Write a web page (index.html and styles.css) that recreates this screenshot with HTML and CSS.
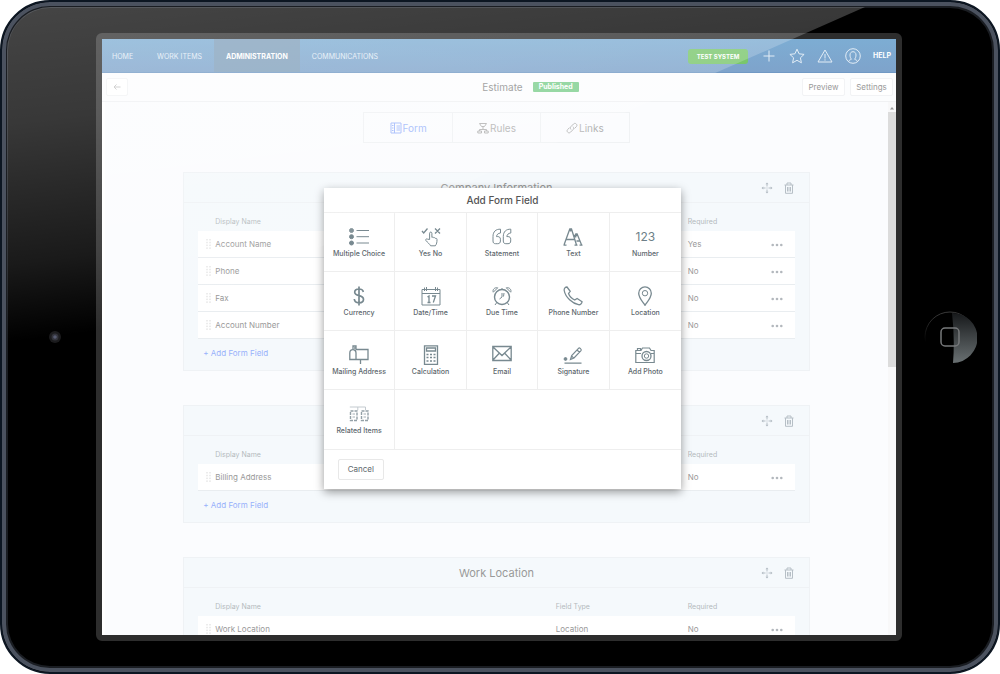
FILE: index.html
```html
<!DOCTYPE html>
<html lang="en">
<head>
<meta charset="utf-8">
<title>Estimate form</title>
<link rel="stylesheet" href="styles.css">
</head>
<body>
<svg class="defs" aria-hidden="true">
  <symbol id="move" viewBox="0 0 12 12"><path d="M6 1v3.500M6 7.500V11M1 6h3.500M7.500 6H11M6 5.500v1" stroke="currentColor" stroke-width="1" fill="none"/><path d="M4.500 2.300L6 .5l1.500 1.800zM4.500 9.700L6 11.500l1.500-1.800zM2.300 4.500L.5 6l1.800 1.500zM9.700 4.500L11.500 6 9.700 7.500z" fill="currentColor" stroke="none"/></symbol>
  <symbol id="trash" viewBox="0 0 12 12"><path d="M1.500 3h9M4 3V1h4v2M2.500 3v8.300h7V3M4.500 5v4.500M6 5v4.500M7.500 5v4.500" stroke="currentColor" fill="none"/></symbol>
  <symbol id="grip" viewBox="0 0 5 10"><path d="M1 0v10M4 0v10" stroke="currentColor" stroke-dasharray="1.500 1.300" fill="none"/></symbol>
  <symbol id="dots" viewBox="0 0 12 4"><circle cx="1.700" cy="2" r="1.300"/><circle cx="6" cy="2" r="1.300"/><circle cx="10.300" cy="2" r="1.300"/></symbol>
</svg>
<div class="tablet">
  <div class="side side-left">
    <svg class="camera" viewBox="0 0 14 14"><circle cx="7" cy="7" r="6" fill="#1b1b1d"/><circle cx="7" cy="7" r="3.500" fill="#33343c"/><circle cx="7" cy="7" r="1.800" fill="#565b70"/></svg>
  </div>
  <div class="screen">
    <header class="nav">
      <nav class="links">
        <a href="#">HOME</a>
        <a href="#">WORK ITEMS</a>
        <a href="#" class="active">ADMINISTRATION</a>
        <a href="#">COMMUNICATIONS</a>
      </nav>
      <div class="tools">
        <span class="system">TEST SYSTEM</span>
        <button aria-label="Add"><svg viewBox="0 0 16 16"><path d="M8 2.500v11M2.500 8h11"/></svg></button>
        <button aria-label="Favorites"><svg viewBox="0 0 16 16"><path d="M8 1.200l2.100 4.600 5 .6-3.700 3.400 1 5L8 12.300l-4.400 2.500 1-5L.9 6.400l5-.6z"/></svg></button>
        <button aria-label="Alerts"><svg viewBox="0 0 16 16"><path d="M8 2L15 14H1zM8 6v4.500M8 11.300v1.300"/></svg></button>
        <button aria-label="Profile"><svg viewBox="0 0 16 16"><circle cx="8" cy="8" r="7.300"/><path d="M3.500 13.500c.5-1.500 2-1.700 3-2.300C5.400 10.300 5 8.500 5 7c0-2 1.200-3.300 3-3.300S11 5 11 7c0 1.500-.4 3.300-1.500 4.200 1 .6 2.500.8 3 2.300"/></svg></button>
        <a href="#" class="help">HELP</a>
      </div>
    </header>
    <div class="bar">
      <button class="btn back" aria-label="Back"><svg viewBox="0 0 8 8"><path d="M7.500 4H1M3.500 1.500L1 4l2.500 2.500"/></svg></button>
      <h1>Estimate</h1>
      <div class="bar-right">
        <span class="badge">Published</span>
        <button class="btn">Preview</button>
        <button class="btn">Settings</button>
      </div>
    </div>
    <div class="body">
      <main class="content">
        <div class="tabs">
          <button class="on"><svg viewBox="0 0 12 12"><path d="M1 1h10v10H1zM4.500 1v10M6.500 4H10M6.500 6H10M6.500 8H10M2 3.500h1.500M2 6h1.500M2 8.500h1.500"/></svg>Form</button>
          <button><svg viewBox="0 0 12 12"><path d="M2.500 1.500h7L7.500 4.500h-3zM6 4.500v3M2.500 9V7.500h7V9M.8 9h3.700v2H.8zM7.500 9h3.700v2H7.500z"/></svg>Rules</button>
          <button><svg viewBox="0 0 12 12"><path d="M5 7.500c-1-1-.8-2.200 0-3L7.500 2c1-1 2-.8 2.800 0s.9 1.800 0 2.700L8.500 6.500M7 4.700c1 1 .8 2.200 0 3L4.500 10.200c-1 1-2 .8-2.800 0s-.9-1.800 0-2.700l1.800-1.900"/></svg>Links</button>
        </div>
        <section class="card">
          <div class="card-head"><h2>Company Information</h2>
            <div class="acts"><button aria-label="Move"><svg><use href="#move"/></svg></button><button aria-label="Delete"><svg><use href="#trash"/></svg></button></div></div>
          <div class="card-body">
            <table>
              <thead><tr><th class="c-grip"></th><th>Display Name</th><th class="c-type"></th><th class="c-req">Required</th><th class="c-more"></th></tr></thead>
              <tbody>
                <tr><td class="c-grip"><svg><use href="#grip"/></svg></td><td>Account Name</td><td></td><td>Yes</td><td><button class="more" aria-label="More"><svg><use href="#dots"/></svg></button></td></tr>
                <tr><td class="c-grip"><svg><use href="#grip"/></svg></td><td>Phone</td><td></td><td>No</td><td><button class="more" aria-label="More"><svg><use href="#dots"/></svg></button></td></tr>
                <tr><td class="c-grip"><svg><use href="#grip"/></svg></td><td>Fax</td><td></td><td>No</td><td><button class="more" aria-label="More"><svg><use href="#dots"/></svg></button></td></tr>
                <tr><td class="c-grip"><svg><use href="#grip"/></svg></td><td>Account Number</td><td></td><td>No</td><td><button class="more" aria-label="More"><svg><use href="#dots"/></svg></button></td></tr>
              </tbody>
            </table>
            <a href="#" class="add">+ Add Form Field</a>
          </div>
        </section>
        <section class="card">
          <div class="card-head"><h2></h2>
            <div class="acts"><button aria-label="Move"><svg><use href="#move"/></svg></button><button aria-label="Delete"><svg><use href="#trash"/></svg></button></div></div>
          <div class="card-body">
            <table>
              <thead><tr><th class="c-grip"></th><th>Display Name</th><th class="c-type"></th><th class="c-req">Required</th><th class="c-more"></th></tr></thead>
              <tbody>
                <tr><td class="c-grip"><svg><use href="#grip"/></svg></td><td>Billing Address</td><td></td><td>No</td><td><button class="more" aria-label="More"><svg><use href="#dots"/></svg></button></td></tr>
              </tbody>
            </table>
            <a href="#" class="add">+ Add Form Field</a>
          </div>
        </section>
        <section class="card">
          <div class="card-head"><h2>Work Location</h2>
            <div class="acts"><button aria-label="Move"><svg><use href="#move"/></svg></button><button aria-label="Delete"><svg><use href="#trash"/></svg></button></div></div>
          <div class="card-body">
            <table>
              <thead><tr><th class="c-grip"></th><th>Display Name</th><th class="c-type">Field Type</th><th class="c-req">Required</th><th class="c-more"></th></tr></thead>
              <tbody>
                <tr><td class="c-grip"><svg><use href="#grip"/></svg></td><td>Work Location</td><td>Location</td><td>No</td><td><button class="more" aria-label="More"><svg><use href="#dots"/></svg></button></td></tr>
              </tbody>
            </table>
          </div>
        </section>
      </main>
      <div class="scroll"><svg viewBox="0 0 8 8"><path d="M2 5.500h4L4 3z" fill="#999"/></svg><div class="thumb"></div></div>
    </div>
    <div class="overlay">
      <div class="modal" role="dialog" aria-labelledby="dlg">
        <h2 id="dlg">Add Form Field</h2>
        <div class="grid">
          <button><svg viewBox="0 0 20 20"><g fill="#788990"><circle cx="2.500" cy="3.500" r="2"/><circle cx="2.500" cy="9.700" r="2"/><circle cx="2.500" cy="16" r="2"/></g><path d="M7.500 3.500H20M7.500 9.700H20M7.500 16H20"/></svg>Multiple Choice</button>
          <button><svg viewBox="0 0 20 20"><path d="M1 4l1.700 2L6.500 1.500M14 1.500l5 5M19 1.500l-5 5" stroke-width="1.300"/><path d="M8.600 12.500V6.200c0-1.500 2.300-1.500 2.300 0v4.200c.8-.5 1.700-.3 1.900.4.700-.4 1.500 0 1.700.6 1-.2 1.500.2 1.500 1 0 3-.3 4.600-1.700 6.400H9.600c-1-2-3-3.200-4.700-5.300-.7-1 .4-2 1.500-1.400z"/></svg>Yes No</button>
          <button><svg viewBox="0 0 20 20"><path d="M8.500 2.200C4 2 1 4.500 1 9.500V14c0 1.800.9 2.700 2.500 2.700h2.200c1.800 0 2.700-1 2.700-2.700v-1.800c0-1.700-1-2.600-2.600-2.600H4.500C4.800 7.500 6 6.300 8.500 6zM18.800 2.200c-4.500-.2-7.500 2.300-7.500 7.300V14c0 1.800.9 2.700 2.500 2.700H16c1.800 0 2.700-1 2.700-2.700v-1.800c0-1.700-1-2.600-2.600-2.600h-1.300c.3-2.100 1.500-3.300 4-3.600z"/></svg>Statement</button>
          <button><svg viewBox="0 0 20 20"><path d="M1 18L6.800 2h1.700l5 16M3.400 12.500h8.300M.5 18.200h3M7.600 4.500v-2M10.800 10.500l2-3.500h1.300l4.500 11M13.500 7l-1 3.500M13.500 14h3.600M11.500 18.200h3M16.500 18.200h3" stroke-width="1.300"/></svg>Text</button>
          <button><span class="digits">123</span>Number</button>
          <button><svg viewBox="0 0 20 20"><path d="M14.300 6C14 4 12.500 3 10 3 7.300 3 5.700 4.300 5.700 6.200c0 4.600 8.800 2.300 8.800 7 0 2.300-1.800 3.600-4.500 3.600S5.500 15.500 5.300 13M10 .5v19" stroke-width="1.700"/></svg>Currency</button>
          <button><svg viewBox="0 0 20 20"><path d="M1 3.500h18V19H1zM1 7.500h18M5.500 1v4M14.500 1v4M3.500 1.500v3.500M16.500 1.500v3.500"/><path d="M6.500 11l1.500-1v6.500M6.500 16.500h3M11 10h3.500L12.300 16.500" stroke-width="1.300"/></svg>Date/Time</button>
          <button><svg viewBox="0 0 20 20"><circle cx="10" cy="11" r="7.500" stroke-width="1.400"/><path d="M10 11V7M10 11l-2.500 2M12 7l-.5 3.500M4.600 16.800L3 19M15.400 16.800L17 19M1.300 6.200C.2 4 2.500 1 5.700 1.800zM18.700 6.200c1.100-2.200-1.200-5.200-4.400-4.400zM10 3.500V2"/></svg>Due Time</button>
          <button><svg viewBox="0 0 20 20"><path d="M1.200 4.500C.8 2.300 2.500 1 4 1l3.200 4.300-1.700 2.200c1 2.700 3.500 5.200 6.200 6.500l2.400-1.500 5 3.200c-.3 2-1.700 3.300-3.600 3C9.500 17.500 2.500 11.500 1.200 4.500z" stroke-width="1.300"/></svg>Phone Number</button>
          <button><svg viewBox="0 0 20 20"><path d="M10 19.300C7 15 3.700 11.500 3.700 7.200a6.300 6.300 0 0 1 12.600 0C16.300 11.500 13 15 10 19.300z" stroke-width="1.300"/><circle cx="10" cy="7.200" r="2.700"/></svg>Location</button>
          <button><svg viewBox="0 0 20 20"><path d="M6.500 4.500H19v10H7V8C7 3.500.8 3.500.8 8v6.500H7M4 5V1h3v2H5M11.500 14.500V19" stroke-width="1.300"/></svg>Mailing Address</button>
          <button><svg viewBox="0 0 20 20"><path d="M3.500.8h13v18.500h-13zM5.500 3h9v3h-9z" stroke-width="1.300"/><path d="M5.500 9.500h9M5.500 12.500h9M5.500 16h9" stroke-dasharray="2 1.500" stroke-width="1.500"/></svg>Calculation</button>
          <button><svg viewBox="0 0 20 20"><path d="M.8 1.500h18.400v14H.8zM1 2l9 8.500L19 2M1 15l6-6.500M19 15l-6-6.500" stroke-width="1.300"/></svg>Email</button>
          <button><svg viewBox="0 0 20 20"><path d="M1.500 18.200H18.500M7.500 14.500l1.200-4L15.500 3.300c1-1 3.500 1 2.500 2.300L11 13zM14 5l2.500 2.300M8.500 10.800l2.300 2.300" stroke-width="1.200"/><circle cx="2.500" cy="14" r="1.400" fill="#788990"/></svg>Signature</button>
          <button><svg viewBox="0 0 20 20"><path d="M.8 5.500H6L7.500 3h7L16 5.500h3.200v12H.8zM2.500 5.500V3.500h3v2M1 8.500h5M16 8.500h3" stroke-width="1.200"/><circle cx="11.500" cy="11" r="4.500" stroke-width="1.300"/><circle cx="11.500" cy="11" r="2.200"/></svg>Add Photo</button>
          <button><svg viewBox="0 0 20 20"><path d="M.8 3h15.700v3M8.800 3v3" stroke="#c3cacf"/><path d="M1.500 7H8v9.500H1.500zM12.500 7H19v9.500h-6.500z" stroke="#93a0a7" stroke-dasharray="3 1" stroke-width="1.400"/><path d="M3.500 10H6M3.500 13H6M14.500 10H17M14.500 13H17" stroke="#a5b0b6"/></svg>Related Items</button>
          <div class="blank"></div>
        </div>
        <footer><button class="cancel">Cancel</button></footer>
      </div>
    </div>
  </div>
  <div class="side">
    <svg class="home" viewBox="0 0 54 54">
      <defs><linearGradient id="hg" x1="0" y1="0" x2="0" y2="1"><stop offset="0" stop-color="#17191b"/><stop offset="1" stop-color="#697072"/></linearGradient>
      <linearGradient id="ring" x1="0" y1="0" x2="0" y2="1"><stop offset="0" stop-color="#3a3a3a"/><stop offset=".6" stop-color="#000"/></linearGradient></defs>
      <circle cx="27" cy="27" r="25" fill="#000" stroke="url(#ring)"/>
      <path d="M29 3a25 25 0 0 1 1 50q2-25-1-50z" fill="url(#hg)"/>
      <rect x="18" y="18" width="18" height="18" rx="4" fill="none" stroke="#77797b" stroke-width="1.500"/>
    </svg>
  </div>
  <div class="gloss"></div>
</div>
</body>
</html>
```
FILE: styles.css
```css
* { box-sizing: border-box; }
body { margin: 0; background: #fff; font-family: Inter, "Liberation Sans", sans-serif; font-size: 8px; line-height: 10px; color: #999; }
button { font: inherit; color: inherit; background: none; border: 0; padding: 0; }
a { color: inherit; text-decoration: none; }
h1, h2 { margin: 0; font-weight: 400; }
svg { display: block; fill: none; stroke: currentColor; }
.defs { position: absolute; width: 0; height: 0; }

.tablet {
  position: relative; height: 100vh; overflow: hidden;
  display: grid; grid-template-columns: 94px minmax(0, 1fr) 96px;
  padding: 31px 0;
  background: #000; border: 2px solid #0c1622; border-radius: 50px;
  box-shadow: inset 0 0 0 4px #4b525f, inset 0 0 0 6px #1a1d22;
}
.side { display: grid; place-items: center; }
.side-left { padding-left: 12px; }
.camera { width: 14px; height: 14px; stroke: none; }
.home { width: 54px; height: 54px; stroke: none; }
.gloss {
  position: absolute; inset: 5px; pointer-events: none; border-radius: 44px;
  background: linear-gradient(173deg, rgba(255,255,255,.27), rgba(255,255,255,.22) 15%, rgba(255,255,255,.1) 33%, rgba(255,255,255,0) 43%);
  clip-path: polygon(0 0, 858px 0, 0 378px);
}

.screen {
  position: relative; min-height: 0; overflow: hidden;
  display: flex; flex-direction: column;
  background: #fff; border: 6px solid #2d2d2d; border-radius: 6px;
}
.nav {
  flex: none; height: 34px; display: flex; justify-content: space-between;
  background: linear-gradient(#7dadd3, #7ea3cb); border-bottom: 1px solid #7199c4;
  color: #e3edf6; font-size: 7px;
}
.links { display: flex; }
.links a { display: flex; align-items: center; padding: 3px 12px 0; }
.links a:first-child { padding-left: 10px; }
.links .active { background: #7f9fbb; color: #fff; font-weight: 700; }
.tools { display: flex; align-items: center; gap: 12px; padding: 1px 5px 0 0; }
.tools svg { width: 16px; height: 16px; }
.system { width: 60px; margin-right: 1px; line-height: 15px; text-align: center; border-radius: 3px; background: #79c66c; color: #fff; font-weight: 700; font-size: 6px; }
.help { color: #fff; font-weight: 700; }

.bar {
  flex: none; height: 29px; display: grid; grid-template-columns: 1fr auto 1fr; align-items: center;
  padding: 0 3px 0 4px; background: #fcfdfe; border-bottom: 1px solid #f0f1f3;
}
.bar h1 { font-size: 10px; padding-left: 6px; color: #8e8e8e; }
.bar-right { display: flex; align-items: center; gap: 5px; padding-left: 10px; }
.badge { width: 46px; margin-right: auto; text-align: center; border-radius: 1px; background: #7fcf8f; color: #fff; font-weight: 700; font-size: 7px; }
.btn { width: 43px; height: 18px; background: #fff; border: 1px solid #f2f3f5; border-radius: 2px; color: #999; }
.back { width: 22px; display: grid; place-items: center; color: #c4c4c4; }
.back svg { width: 8px; height: 8px; }

.body { flex: 1; min-height: 0; display: flex; background: #fbfcfe; border-left: 3px solid #fff; }
.content { flex: 1; overflow: hidden; display: flex; flex-direction: column; align-items: center; gap: 34px; padding-top: 10px; }
.scroll { flex: none; width: 8px; padding-top: 2px; background: #f8f8f9; stroke: none; }
.scroll svg { width: 8px; height: 8px; stroke: none; }
.thumb { height: 48%; background: #dcdcdc; }

.tabs { flex: none; display: flex; width: 34%; margin-bottom: -5px; border: 1px solid #f0f2f4; }
.tabs button { flex: 1; height: 29px; display: flex; align-items: center; justify-content: center; gap: 1px; font-size: 10px; color: #b3b3b3; }
.tabs button + button { border-left: 1px solid #f0f2f4; }
.tabs svg { width: 12px; height: 12px; }
.tabs .on { color: #9fb8fb; }

.card { flex: none; width: 80%; background: #f5f9fc; border: 1px solid #eff2f5; }
.card-head { display: grid; grid-template-columns: 1fr auto 1fr; align-items: center; height: 30px; border-bottom: 1px solid #eff2f5; }
.card-head h2 { grid-column: 2; font-size: 11px; color: #999; }
.acts { display: flex; justify-content: flex-end; gap: 10px; padding-right: 14px; color: #b6bfc6; }
.acts svg { width: 12px; height: 12px; }
.card-body { padding: 14px 14px 12px; }
table { width: 100%; table-layout: fixed; border-collapse: separate; border-spacing: 0; text-align: left; }
th { height: 14px; padding: 0; font-weight: 400; font-size: 7px; color: #b4b9bd; vertical-align: top; }
td { height: 27px; padding: 0; background: #fff; border-bottom: 1px solid #e9edf0; vertical-align: middle; }
.c-grip { width: 17px; padding-left: 8px; color: #d9d9d9; }
.c-grip svg { width: 5px; height: 10px; }
.c-type { width: 132px; }
.c-req { width: 83px; }
.c-more { width: 24px; }
.more svg { width: 12px; height: 4px; fill: #b3b8bd; stroke: none; }
.add { display: block; padding: 9px 0 0 5px; color: #97b1fb; }

.overlay { position: absolute; inset: 0; display: grid; place-items: center; padding-top: 2px; }
.modal { width: 45%; margin-left: 7px; background: #fff; box-shadow: 0 3px 9px rgba(0,0,0,.4); color: #5d676d; }
.modal h2 { height: 24px; line-height: 24px; text-align: center; font-size: 10px; font-weight: 500; color: #555; }
.grid { display: grid; grid-template-columns: repeat(5, 1fr); grid-auto-rows: 1fr; height: 238px; border-top: 1px solid #eee; }
.grid button { display: flex; flex-direction: column; align-items: center; gap: 2px; padding-top: 14px; font-size: 7px; font-weight: 500; white-space: nowrap; border-right: 1px solid #eee; border-bottom: 1px solid #eee; }
.grid button:nth-child(5n) { border-right: 0; }
.grid svg { width: 20px; height: 20px; flex: none; stroke: #788990; }
.digits { height: 20px; line-height: 20px; font-size: 12px; font-weight: 400; color: #6d7f88; }
.blank { grid-column: span 4; border-bottom: 1px solid #eee; }
.modal footer { padding: 9px 14px; }
.cancel { width: 46px; height: 21px; border: 1px solid #e8e8e8; border-radius: 2px; }
```
